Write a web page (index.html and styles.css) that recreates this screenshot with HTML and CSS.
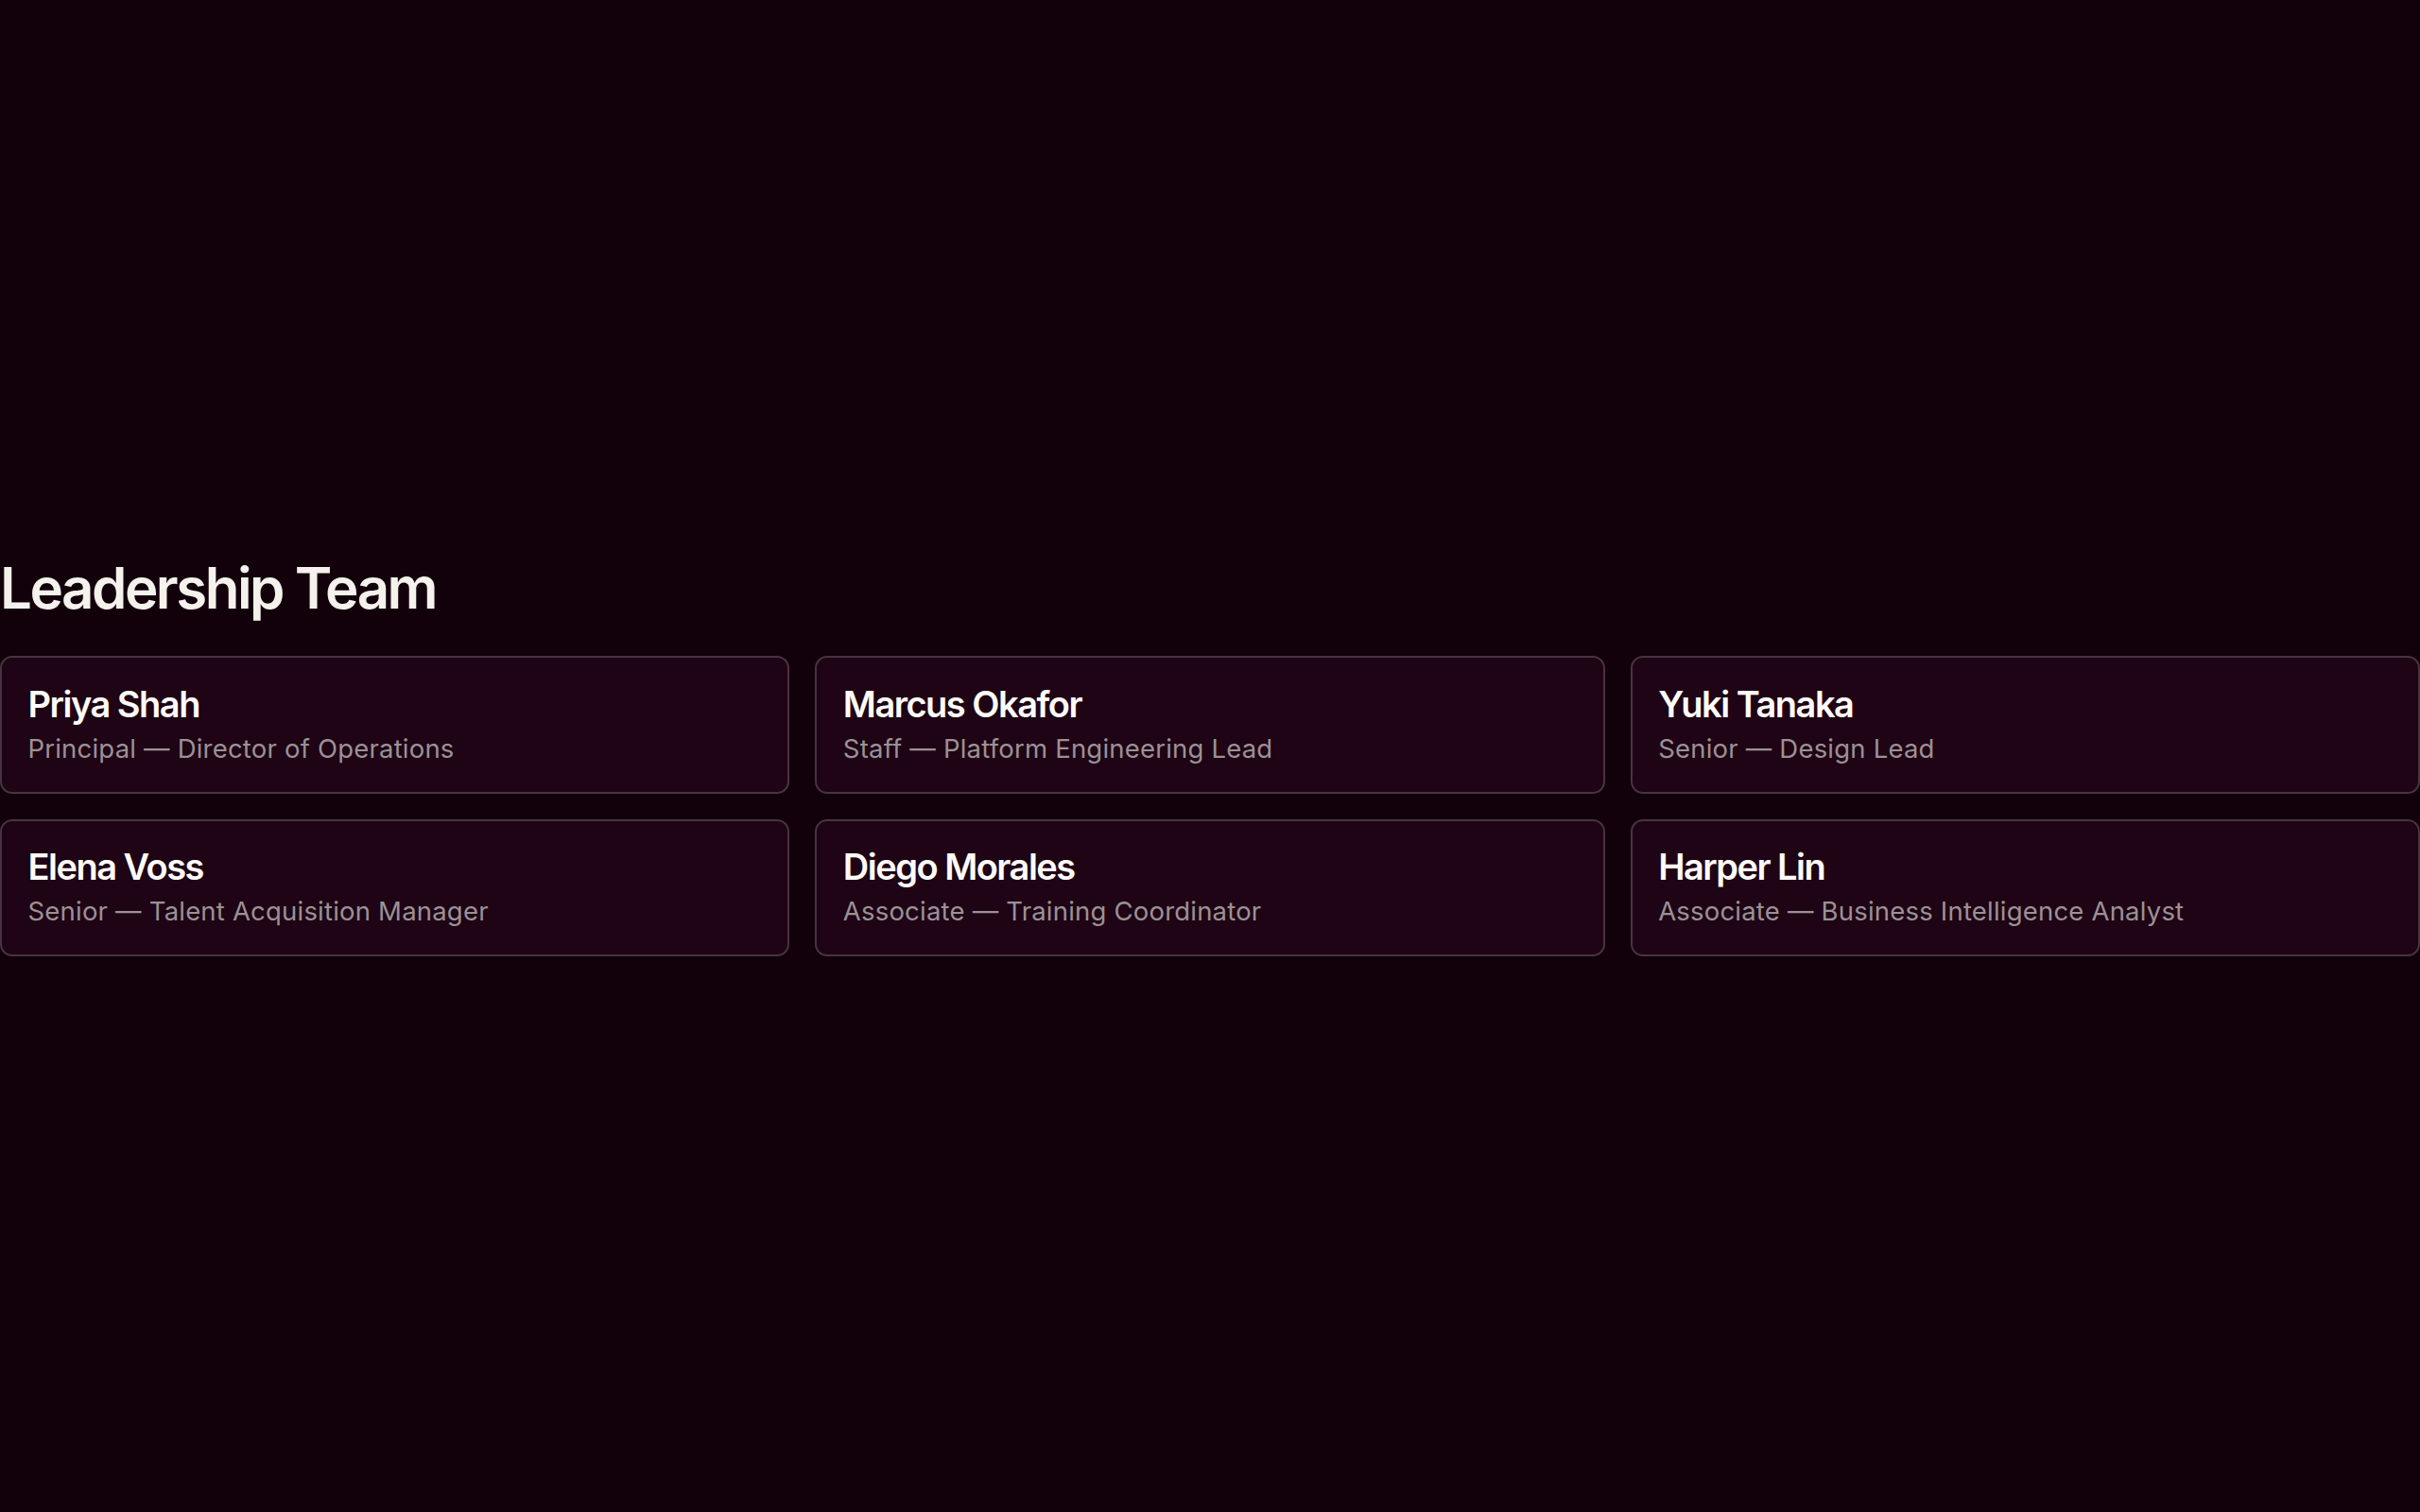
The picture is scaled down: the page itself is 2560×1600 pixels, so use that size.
FILE: index.html
```html
<!DOCTYPE html>
<html lang="en">
<head>
<meta charset="utf-8">
<title>Leadership Team</title>
<link rel="stylesheet" href="styles.css">
</head>
<body>
<main class="page">
  <section class="team">
    <h1 class="team-title">Leadership Team</h1>
    <div class="team-grid">
      <div class="member">
        <div class="member-name">Priya Shah</div>
        <div class="member-role">Principal — Director of Operations</div>
      </div>
      <div class="member">
        <div class="member-name">Marcus Okafor</div>
        <div class="member-role">Staff — Platform Engineering Lead</div>
      </div>
      <div class="member">
        <div class="member-name">Yuki Tanaka</div>
        <div class="member-role">Senior — Design Lead</div>
      </div>
      <div class="member">
        <div class="member-name">Elena Voss</div>
        <div class="member-role">Senior — Talent Acquisition Manager</div>
      </div>
      <div class="member">
        <div class="member-name">Diego Morales</div>
        <div class="member-role">Associate — Training Coordinator</div>
      </div>
      <div class="member">
        <div class="member-name">Harper Lin</div>
        <div class="member-role">Associate — Business Intelligence Analyst</div>
      </div>
    </div>
  </section>
</main>
</body>
</html>
```

FILE: styles.css
```css
* {
  box-sizing: border-box;
}

html,
body {
  margin: 0;
  padding: 0;
}

body {
  background: #12000b;
  font-family: Inter, "Noto Sans", "Liberation Sans", sans-serif;
  color: #f5f1ec;
}

.page {
  min-height: 100vh;
  padding-bottom: 3px;
  display: flex;
  flex-direction: column;
  justify-content: center;
}

.team-title {
  margin: 0 0 35px 0;
  font-size: 60px;
  line-height: 74px;
  font-weight: 600;
  letter-spacing: -2.5px;
  color: #f5f1ec;
}

.team-grid {
  display: grid;
  grid-template-columns: repeat(3, 1fr);
  gap: 27px;
}

.member {
  background: #1e0414;
  border: 2px solid #47343f;
  border-radius: 13px;
  padding: 25.5px 28px 29px 27.5px;
}

.member-name {
  font-size: 38px;
  line-height: 46px;
  font-weight: 600;
  letter-spacing: -1.5px;
  color: #fdfbf8;
}

.member-role {
  margin-top: 7px;
  font-size: 27.5px;
  line-height: 34px;
  font-weight: 400;
  letter-spacing: 0.2px;
  color: #9b9197;
}
```
